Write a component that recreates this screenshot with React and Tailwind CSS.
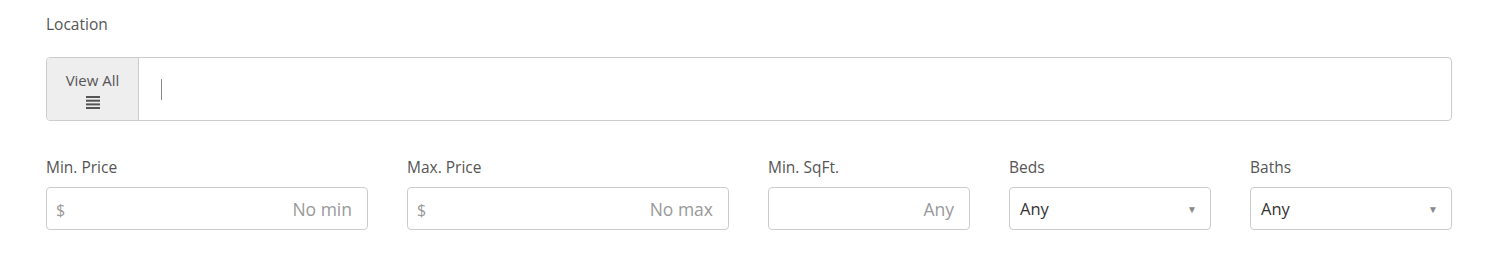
import { useState } from 'react'

const font = { fontFamily: '"Open Sans", "Liberation Sans", sans-serif' }

function ListIcon() {
  return (
    <svg width="14" height="13" viewBox="0 0 14 13" fill="#555">
      <rect x="0" y="0" width="14" height="2" />
      <rect x="0" y="3.7" width="14" height="2" />
      <rect x="0" y="7.4" width="14" height="2" />
      <rect x="0" y="11" width="14" height="2" />
    </svg>
  )
}

function Field({ label, width, children }) {
  return (
    <div className={`flex flex-col ${width}`}>
      <label className="text-[15.5px] text-[#555] leading-5 mb-[10px]">{label}</label>
      {children}
    </div>
  )
}

function PriceInput({ placeholder, prefix }) {
  return (
    <div className="flex items-center h-[43px] border border-[#ccc] rounded-[4px] bg-white px-[9px] pt-[2px] text-[17.5px]">
      {prefix && <span className="text-[#999] text-[16px]">{prefix}</span>}
      <input
        className="flex-1 min-w-0 text-right outline-none placeholder:text-[#999] text-[#555] pr-[6px]"
        placeholder={placeholder}
      />
    </div>
  )
}

function SelectBox() {
  return (
    <div className="relative h-[43px] border border-[#ccc] rounded-[4px] bg-white flex items-center pl-[10px] pr-[13px] pt-[2px] text-[16.5px] text-[#333]">
      <span className="flex-1">Any</span>
      <span className="text-[#888] text-[10px]">▼</span>
    </div>
  )
}

export default function App() {
  const [loc, setLoc] = useState('')

  return (
    <div className="w-[1500px] h-[274px] bg-white pl-[46px] pr-[48px] pt-[14px]" style={font}>
      {/* Location */}
      <label className="block text-[15.5px] text-[#555] leading-5 mb-[23px]">Location</label>
      <div className="flex h-[64px] border border-[#ccc] rounded-[4px] overflow-hidden">
        <button className="w-[92px] bg-[#eee] border-r border-[#ccc] flex flex-col items-center justify-center gap-[8px] text-[15px] text-[#555] pt-[2px]">
          <span className="leading-4">View All</span>
          <ListIcon />
        </button>
        <div className="flex-1 flex items-center pl-[22px]">
          <span className="w-px h-[21px] bg-[#888]" />
          <input
            className="flex-1 outline-none text-[16px] text-[#555] ml-1"
            value={loc}
            onChange={(e) => setLoc(e.target.value)}
          />
        </div>
      </div>

      {/* Filters */}
      <div className="flex gap-[39px] mt-[36px]">
        <Field label="Min. Price" width="w-[322px]">
          <PriceInput prefix="$" placeholder="No min" />
        </Field>
        <Field label="Max. Price" width="w-[322px]">
          <PriceInput prefix="$" placeholder="No max" />
        </Field>
        <Field label="Min. SqFt." width="w-[202px]">
          <PriceInput placeholder="Any" />
        </Field>
        <Field label="Beds" width="w-[202px]">
          <SelectBox />
        </Field>
        <Field label="Baths" width="w-[202px]">
          <SelectBox />
        </Field>
      </div>
    </div>
  )
}
